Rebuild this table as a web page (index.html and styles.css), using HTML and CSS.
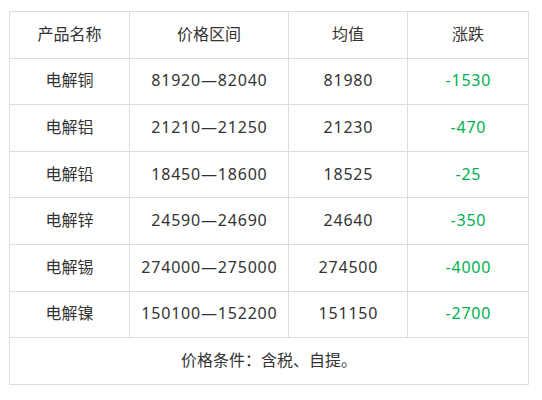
FILE: index.html
```html
<!DOCTYPE html>
<html lang="zh">
<head>
<meta charset="utf-8">
<link rel="stylesheet" href="styles.css">
</head>
<body>
<table class="price-table">
  <colgroup>
    <col class="c1"><col class="c2"><col class="c3"><col class="c4">
  </colgroup>
  <tr><td>产品名称</td><td>价格区间</td><td>均值</td><td>涨跌</td></tr>
  <tr><td>电解铜</td><td class="num">81920—82040</td><td class="num">81980</td><td class="num down">-1530</td></tr>
  <tr><td>电解铝</td><td class="num">21210—21250</td><td class="num">21230</td><td class="num down">-470</td></tr>
  <tr><td>电解铅</td><td class="num">18450—18600</td><td class="num">18525</td><td class="num down">-25</td></tr>
  <tr><td>电解锌</td><td class="num">24590—24690</td><td class="num">24640</td><td class="num down">-350</td></tr>
  <tr><td>电解锡</td><td class="num">274000—275000</td><td class="num">274500</td><td class="num down">-4000</td></tr>
  <tr><td>电解镍</td><td class="num">150100—152200</td><td class="num">151150</td><td class="num down">-2700</td></tr>
  <tr><td colspan="4">价格条件：含税、自提。</td></tr>
</table>
</body>
</html>
```

FILE: styles.css
```css
html, body {
  margin: 0;
  padding: 0;
  background: #fff;
}
body {
  padding: 11px 0 0 9px;
  font-family: "Noto Sans", "Noto Sans CJK SC", sans-serif;
  font-size: 16px;
  color: #333;
}
.price-table {
  border-collapse: collapse;
  table-layout: fixed;
  width: 519px;
}
.c1 { width: 120px; }
.c2 { width: 159px; }
.c3 { width: 119px; }
.c4 { width: 121px; }
.price-table td {
  border: 1px solid #ddd;
  text-align: center;
  height: 46.6px;
  padding: 0 0 2px;
  box-sizing: border-box;
  line-height: 20px;
}
.num {
  letter-spacing: 0.8px;
  text-indent: 0.8px;
}
.down {
  color: #00b050;
}
```
